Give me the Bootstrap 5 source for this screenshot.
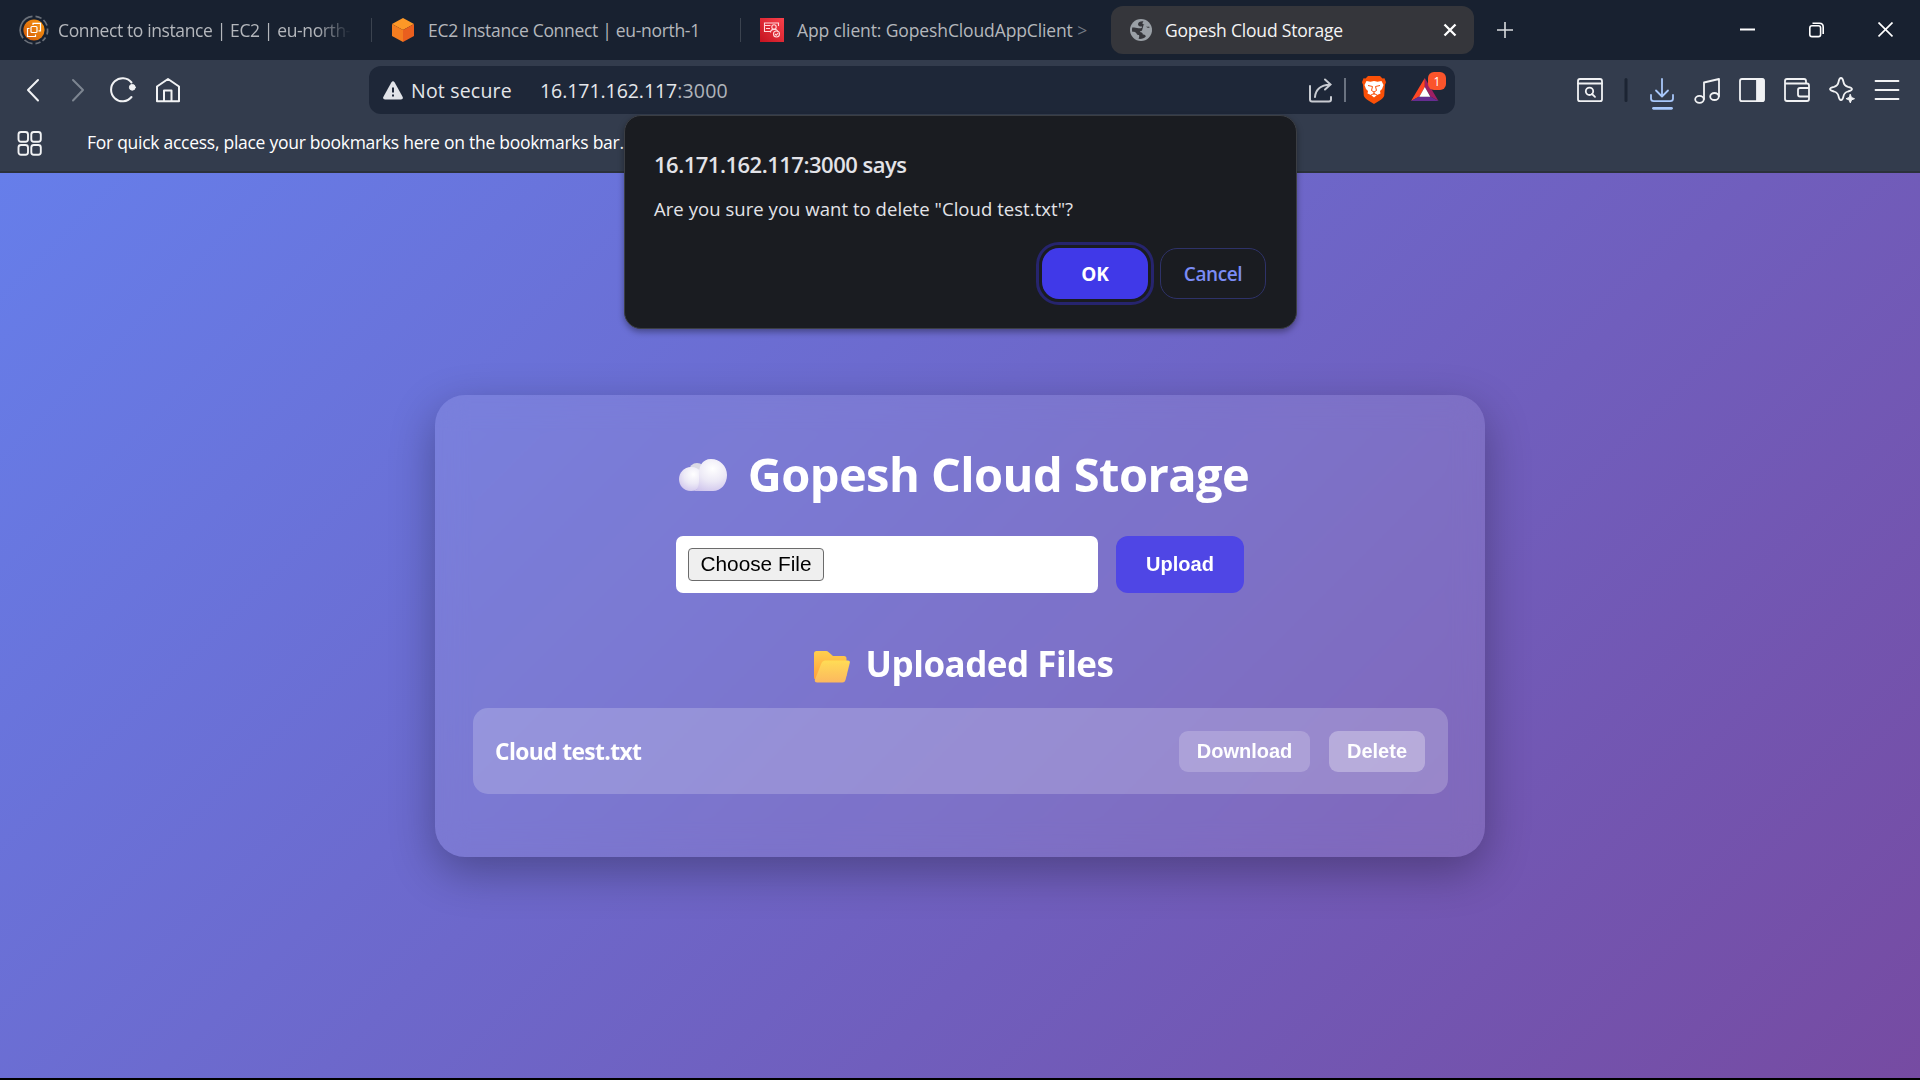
<!DOCTYPE html>
<html lang="en">
<head>
<meta charset="utf-8">
<title>Gopesh Cloud Storage</title>
<link href="https://cdn.jsdelivr.net/npm/bootstrap@5.3.0/dist/css/bootstrap.min.css" rel="stylesheet">
<style>
html,body{height:1080px;overflow:hidden}
body{width:1920px;background:#000;font-family:"Open Sans","Noto Sans",sans-serif;font-size:17.5px;line-height:24px;color:#fff}
svg{display:block;flex:none}
.t{white-space:nowrap;flex:none}
.tabstrip{height:60px;background:#182130;color:#b4b7bc}
.tab-item{height:48px}
.tab-item .t{padding-bottom:1px}
.tab1{width:371px;padding-left:19px}
.tab2{width:368px;padding-left:20px}
.tab3{width:370px;padding-left:19px}
.tab1 .t{margin-left:9px;letter-spacing:-.38px}
.tab2 .t{margin-left:14px;letter-spacing:-.31px}
.tab3 .t{margin-left:13px;letter-spacing:-.12px}
.tab-live .t{margin-left:12px;letter-spacing:-.2px}
.tab-sep{width:1px;height:24px;background:#3b434f}
.fade-end{-webkit-mask-image:linear-gradient(90deg,#000 88%,transparent 100%);mask-image:linear-gradient(90deg,#000 88%,transparent 100%)}
.tab-live{width:363px;background:#35363b;border-radius:12px;color:#f4f4f5;padding:0 17px 0 18px}
.new-tab{margin-left:23px}
.win-controls{gap:54px;padding-right:27px}
.toolbar-row{height:60px;background:#333c4d}
.bookmark-row{height:53px;background:#333c4d;border-bottom:2px solid #2b313b;padding-left:17px}
.bookmark-row svg{margin-top:10px}
.bookmark-row .t{margin:10px 0 0 44px;letter-spacing:-.27px}
.omnibox{width:1086px;height:48px;background:#1e2738;border-radius:12px;font-size:19.5px;color:#e4e6ea}
.omnibox .t{padding-top:1px}
.warn-icon{margin-left:14px}
.not-secure{margin-left:8px;width:129px;letter-spacing:.2px}
.host{letter-spacing:-.06px}
.port{color:#b0b4bb;letter-spacing:.2px}
.page{height:905px;background:linear-gradient(135deg,#667eea,#764ba2)}
.panel{width:1050px;height:462px;border-radius:30px;background:rgba(255,255,255,.1);box-shadow:0 15px 45px rgba(0,0,0,.3);padding:47px 37px 0 38px;backdrop-filter:blur(15px)}
.panel h1{font-size:47px;line-height:64px;font-weight:700;margin:0 0 30px 7px;letter-spacing:-.56px}
.panel h1 svg{margin:2px 21px 0 0}
.panel h2{font-size:35px;line-height:48px;font-weight:700;margin:47px 0 20px 6px;letter-spacing:-.5px}
.panel h2 svg{margin:7px 16px 0 0}
.upload-form{gap:18px;padding-right:1px}
.file-field{width:422px;height:57px;border-radius:7px;background:#fff;padding-left:12px}
.choose{width:136px;height:33px;border:1px solid #6b6b6b;border-radius:4px;background:#efefef;color:#000;font:20.8px/29px "Liberation Sans",Arial,sans-serif}
.choose.pb{padding:0 0 2px}
.act{font:bold 20px/24px "Liberation Sans",Arial,sans-serif;color:#fff;border:0;padding:0}
.upload{width:128px;height:57px;border-radius:12px;background:#4f46e5}
.file-row{height:86px;border-radius:15px;background:rgba(255,255,255,.2);padding:2px 23px 0 22px;font-size:22.8px;font-weight:700}
.file-name{letter-spacing:-.62px}
.mini{height:41px;border-radius:9px;padding-bottom:2px}
.dl{width:131px;background:rgba(255,255,255,.2)}
.del{width:96px;background:rgba(255,255,255,.3);margin-left:19px}
.dialog{position:absolute;left:624px;top:115px;width:673px;height:214px;background:#1a1c21;border:1px solid #3b3e44;border-radius:17px;box-shadow:0 3px 6px rgba(0,0,0,.35);padding:33px 30px 0 29px;color:#e3e3e8}
.says{font-size:22px;line-height:30px;font-weight:600;letter-spacing:-.5px}
.ask{font-size:18.5px;line-height:26px;margin-top:17px;letter-spacing:.05px}
.dialog-actions{gap:12px;margin-top:26px}
.dbtn{width:106px;height:51px;border-radius:17px;font-size:19px;font-weight:600}
.ok{background:#4039e8;color:#fff;outline:3px solid #26246e;outline-offset:3px;font-weight:700}
.cancel{border:1px solid #2e3269;color:#7b8cf5;letter-spacing:-.4px}
</style>
<script src="https://cdn.jsdelivr.net/npm/bootstrap@5.3.0/dist/js/bootstrap.bundle.min.js"></script>
</head>
<body class="position-relative">

<header>
<div class="tabstrip d-flex align-items-center">
  <div class="tab-item tab1 d-flex align-items-center">
    <svg width="30" height="30" viewBox="0 0 30 30"><defs><linearGradient id="og" x1="0" y1="1" x2="1" y2="0"><stop offset="0" stop-color="#d0570a"/><stop offset="1" stop-color="#fb9a10"/></linearGradient></defs><g fill="none" stroke="#6a7079" stroke-width="1.700"><path d="M13.500 1.300A13.700 13.700 0 0 0 4 23.200M5.500 25A13.700 13.700 0 0 0 13.500 28.600"/><path d="M16.500 1.300A13.700 13.700 0 0 1 22.500 3.400M24.500 5A13.700 13.700 0 0 1 28 10.500M28.500 13.500A13.700 13.700 0 0 1 28 19.500M26.500 22.500A13.700 13.700 0 0 1 23.500 25.800M21.500 27A13.700 13.700 0 0 1 16.500 28.600"/></g><circle cx="15" cy="15" r="10.600" fill="url(#og)"/><g fill="none" stroke="#fff" stroke-width="1.200"><rect x="12" y="11.500" width="6" height="6" rx="1"/><path d="M14 10V8.300h7.500v7.500h-2M10.500 13.500h-2v8h8v-2"/></g></svg>
    <span class="t fade-end">Connect to instance | EC2 | eu-north-</span>
  </div>
  <div class="tab-sep"></div>
  <div class="tab-item tab2 d-flex align-items-center">
    <svg width="22" height="24" viewBox="0 0 22 24"><path d="M11 0l11 6-11 6L0 6z" fill="#fd9827"/><path d="M0 6l11 6v12L0 18z" fill="#f47d20"/><path d="M22 6l-11 6v12l11-6z" fill="#ea5f1e"/></svg>
    <span class="t">EC2 Instance Connect | eu-north-1</span>
  </div>
  <div class="tab-sep"></div>
  <div class="tab-item tab3 d-flex align-items-center">
    <svg width="24" height="24" viewBox="0 0 24 24"><defs><linearGradient id="rg" x1="0" y1="1" x2="1" y2="0"><stop offset="0" stop-color="#c4121f"/><stop offset="1" stop-color="#f9414b"/></linearGradient></defs><path d="M0 0h24v24H0z" fill="url(#rg)"/><g fill="none" stroke="#ffd9db" stroke-width="1.100"><path d="M11 13.500H4.500v-8.500h14v3M4.500 7.500h6M6 10.500h4"/><circle cx="14" cy="9" r="2.200"/><path d="M10.500 14.500c0-4 7-4 7-1"/><circle cx="16.500" cy="16" r="3"/><path d="M15 16l1.200 1.200 2-2.200"/></g></svg>
    <span class="t">App client: GopeshCloudAppClient<span style="color:#737983"> &gt;</span></span>
  </div>
  <div class="tab-item tab-live d-flex align-items-center">
    <svg width="24" height="24" viewBox="0 0 24 24"><circle cx="12" cy="12" r="11" fill="#9aa0a6"/><path d="M14.500 3.200c-3-.4-5.500 1-5.500 3 0 1.800 1.500 2.300 3.500 2.300.5 0 .8.500.5 1-1 .8-2 1-3.500.8-2-.2-3.500-.8-6.300-.8-.3 1.500-.3 3 0 4.200 1.800-.2 3.800.3 4.300 1.800.3 1.200 1.500 1.500 2.500 1.500.5 1.300.2 2.500-.5 3.800 3 .5 6-.8 7.300-2.300-.3-1.500-1.300-2-3-2 0-1.500-1-2.500-3-2.500.5-1.300 2.500-1.500 4.700-1.200 2 .3 3.500.5 5.200.2.300-1.500 0-3.200-.6-4.500-1.600.5-3.600.3-4.100-1-.4-1.300-1.500-1.500-2.500-1.500 0-1 .2-2 1-2.800z" fill="#35363b"/><path d="M15.500 3.500c-1 2 0 3.500 1.500 3.700 0 2.500 2 3 4.500 2.500l1 4c-2 1-4.500.5-6.500 0-1.500-.3-3 0-3.500.8" fill="#9aa0a6"/></svg>
    <span class="t">Gopesh Cloud Storage</span>
    <svg class="ms-auto" width="14" height="14" viewBox="0 0 14 14" stroke="#fff" stroke-width="2.300"><path d="M1.500 1.500l11 11M12.500 1.500l-11 11"/></svg>
  </div>
  <svg class="new-tab" width="16" height="16" viewBox="0 0 16 16" stroke="#d9dbde" stroke-width="1.600"><path d="M8 0v16M0 8h16"/></svg>
  <div class="win-controls ms-auto d-flex align-items-center">
    <svg width="15" height="16" viewBox="0 0 15 16"><path d="M0 7.500h15" stroke="#fff" stroke-width="2"/></svg>
    <svg width="15" height="16" viewBox="0 0 15 16" fill="none" stroke="#fff" stroke-width="1.600"><rect x=".8" y="3.800" width="10.800" height="10.800" rx="2.200"/><path d="M3.500 1.200h7c2.500 0 3.700 1.200 3.700 3.700v7"/></svg>
    <svg width="15" height="16" viewBox="0 0 15 16" stroke="#fff" stroke-width="1.700"><path d="M.5.500l14 14M14.500.500l-14 14"/></svg>
  </div>
</div>

<div class="toolbar-row d-flex align-items-center">
  <svg width="369" height="60" viewBox="0 0 369 60" fill="none" stroke="#f1f2f4" stroke-width="2" stroke-linecap="round" stroke-linejoin="round">
    <path d="M38 20L28 30l10 10.500"/><path d="M73 20l10 10-10 10.500" stroke="#7d8591"/>
    <path d="M131.500 37A11.500 11.500 0 1 1 131.500 22.500"/><circle cx="132.300" cy="27.300" r="2.900" fill="#f1f2f4" stroke-width="1"/>
    <path d="M157 26.500L168 19l11 7.500V41.200h-22zM164 41v-10.500h7.500V41"/>
  </svg>
  <div class="omnibox d-flex align-items-center">
    <svg class="warn-icon" width="20" height="19" viewBox="0 0 20 19"><path d="M8.300 1.500q1.700-2.500 3.400 0l8 14.500q.8 2.500-1.700 2.500H2q-2.500 0-1.700-2.500z" fill="#e1e3e8"/><path d="M10 6.500v5M10 13.500v2" stroke="#1e2738" stroke-width="2"/></svg>
    <span class="t not-secure">Not secure</span>
    <span class="t"><span class="host">16.171.162.117</span><span class="port">:3000</span></span>
    <svg class="ms-auto" width="146" height="48" viewBox="1309 66 146 48" fill="none">
      <path d="M1310 86v13.500q0 2 2 2h17q2 0 2-2v-2.500M1315 97q1-11.500 15-12.500M1325 79.500l5.500 5-5.500 5" stroke="#c9ccd2" stroke-width="2" stroke-linecap="round"/>
      <path d="M1345 78v24" stroke="#6a7280" stroke-width="2"/>
      <path d="M1368 76h12l2.500 2.500 2-.2 1.500 4-1 2.500-.8 11q-.5 2-4.500 4.700l-5.700 3.500-5.700-3.500q-4-2.700-4.500-4.700l-.8-11-1-2.500 1.500-4 2 .2z" fill="#fb5007"/>
      <path d="M1366.500 81l4 .7 3.500-.7 3.500.7 4-.7 2 4-1.500 4-2 2 .5 2.500-3.500 1.500-3 2.500-3-2.500-3.500-1.500.5-2.500-2-2-1.500-4z" fill="#fff"/>
      <path d="M1368 85.500l4.500 1-1 4 2.500 1.500 2.500-1.500-1-4 4.500-1M1374 92v3M1371 95l3-1.500 3 1.500" stroke="#fb5007" stroke-width="1"/>
      <path d="M1424.800 78L1411 101l8.500-4.500 5.300-9.500z" fill="#ff4724"/><path d="M1424.800 78l13.700 23-8-4.500-5.700-9.500z" fill="#9e1f63"/><path d="M1411 101l8-4.500h11.500l8 4.500z" fill="#662d91"/><path d="M1424.800 87l5.500 9.800h-11z" fill="#fff"/>
      <rect x="1428" y="72" width="18" height="18" rx="6" fill="#fb542b"/><text x="1437" y="85.500" font-size="12" fill="#fff" text-anchor="middle">1</text>
    </svg>
  </div>
  <svg class="ms-auto" width="344" height="60" viewBox="1576 60 344 60" fill="none" stroke="#f1f2f4" stroke-width="1.800" stroke-linecap="round" stroke-linejoin="round">
    <rect x="1578" y="79" width="24" height="22.200" rx="2"/><path d="M1578 83.500h24"/><circle cx="1589.500" cy="91.300" r="3.700"/><path d="M1592 94l3 2.800"/>
    <path d="M1626 79.500v21" stroke="#1c2433" stroke-width="3"/>
    <g stroke="#a8c7fa"><path d="M1662 79v17M1656 90.500l6 6 6-6M1651 95v3.500q0 2.700 2.700 2.700h16.600q2.700 0 2.700-2.700V95"/><path d="M1653.500 108.300h18" stroke-width="2.800"/></g>
    <ellipse cx="1699.500" cy="99.300" rx="4.300" ry="3.500"/><ellipse cx="1714.500" cy="96.500" rx="4.300" ry="3.500"/><path d="M1704 99V82.500l15-3.500v17"/>
    <rect x="1740" y="79" width="24" height="22.200" rx="2"/><path d="M1757 79h6q1 0 1 1v20q0 1-1 1h-6z" fill="#f1f2f4" stroke-width="1"/>
    <path d="M1806 83.500v-2.500q0-2-2-2h-17q-2 0-2 2v18q0 2 2 2h20q2 0 2-2V85.500q0-2-2-2h-22M1809 88h-9q-2 0-2 2v4.500q0 2 2 2h9"/>
    <path d="M1841 78q1.800 0 2.500 4 .7 3.800 4.500 4.800 4 .8 4 2.300t-4 2.400q-3.800 1-4.500 4.700-.7 4-2.500 4t-2.500-4q-.7-3.700-4.500-4.700-4-.9-4-2.400t4-2.300q3.800-1 4.500-4.800.7-4 2.500-4z"/><path d="M1850.300 94.500l1.200 3 3 1.200-3 1.200-1.200 3-1.200-3-3-1.200 3-1.200z" fill="#f1f2f4" stroke-width="1"/>
    <path d="M1875.500 81h23M1875.500 90h23M1875.500 99h23"/>
  </svg>
</div>

<div class="bookmark-row d-flex">
  <svg width="26" height="27" viewBox="0 0 26 27" fill="none" stroke="#f1f2f4" stroke-width="1.900"><rect x="1.500" y="2" width="9.500" height="9.800" rx="2.500"/><rect x="14.300" y="2" width="9.500" height="9.800" rx="2.500"/><rect x="1.500" y="15" width="9.500" height="9.800" rx="2.500"/><rect x="14.300" y="15" width="9.500" height="9.800" rx="2.500"/></svg>
  <span class="t">For quick access, place your bookmarks here on the bookmarks bar.</span>
</div>
</header>

<main class="page d-flex align-items-center justify-content-center">
  <section class="panel">
    <h1 class="d-flex align-items-center justify-content-center">
      <svg width="48" height="32" viewBox="0 0 48 32"><defs><radialGradient id="c1" cx=".6" cy=".3" r=".8"><stop offset="0" stop-color="#fff"/><stop offset=".5" stop-color="#ece9f6"/><stop offset="1" stop-color="#cdc2ec"/></radialGradient></defs><circle cx="18" cy="12" r="8" fill="#dcdbe5"/><path d="M12 8c9 0 12 7 12 12s-4 12-12 12S0 26 0 20 5 8 12 8z" fill="url(#c1)"/><path d="M32 0c9 0 16 7 16 16s-6 16-14 16H12c8 0 8-6 8-14C19 8 23 0 32 0z" fill="url(#c1)"/></svg>
      <span class="t">Gopesh Cloud Storage</span>
    </h1>
    <div class="upload-form d-flex justify-content-center">
      <div class="file-field d-flex align-items-center"><button class="choose pb">Choose File</button></div>
      <button class="act upload">Upload</button>
    </div>
    <h2 class="d-flex align-items-center justify-content-center">
      <svg width="36" height="32" viewBox="0 0 36 32"><defs><linearGradient id="f1" x1="0" y1="0" x2="0" y2="1"><stop offset="0" stop-color="#ffcf4d"/><stop offset="1" stop-color="#ff9f3d"/></linearGradient><linearGradient id="f2" x1="0" y1="0" x2="0" y2="1"><stop offset="0" stop-color="#ffdc55"/><stop offset="1" stop-color="#fcb85f"/></linearGradient></defs><path d="M0 2.500Q0 0 2.500 0H12q1.500 0 2.700 1.200L19 5h11q2.500 0 2.500 2.500V25H4.500Q0 31 0 26z" fill="url(#f1)"/><path d="M11 9.500h23q2.300 0 1.800 2.300L31.500 29q-.7 2.500-3 2.500H3Q0 31.500 1 28.500L7.500 12q1-2.500 3.500-2.500z" fill="url(#f2)"/></svg>
      <span class="t">Uploaded Files</span>
    </h2>
    <div class="file-row d-flex align-items-center">
      <span class="t file-name">Cloud test.txt</span>
      <button class="act mini dl ms-auto">Download</button>
      <button class="act mini del">Delete</button>
    </div>
  </section>
</main>

<div class="dialog" role="alertdialog">
  <div class="says">16.171.162.117:3000 says</div>
  <div class="ask">Are you sure you want to delete "Cloud test.txt"?</div>
  <div class="dialog-actions d-flex justify-content-end">
    <div class="dbtn ok d-flex align-items-center justify-content-center">OK</div>
    <div class="dbtn cancel d-flex align-items-center justify-content-center">Cancel</div>
  </div>
</div>
</body>
</html>
